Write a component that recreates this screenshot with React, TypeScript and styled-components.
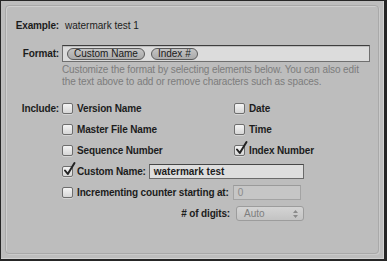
import React from 'react'
import styled, { createGlobalStyle } from 'styled-components'

const GlobalStyle = createGlobalStyle`
  html, body {
    margin: 0;
    padding: 0;
    background: #262626;
  }
  body {
    width: 387px;
    height: 261px;
    overflow: hidden;
    font-family: "Liberation Sans", Arial, sans-serif;
    font-size: 10px;
    color: #1c1c1c;
  }
`

// window chrome
const Window = styled.div`
  box-sizing: border-box;
  width: 383px;
  height: 258px;
  margin: 1px 0 0 1px;
  padding: 4px;
  background: #bdbdbd;
  border-right: 1px solid #d2d2d2;
  border-bottom: 1px solid #d2d2d2;
`

const GroupBox = styled.div`
  box-sizing: border-box;
  height: 100%;
  border: 1px solid #a9a9a9;
  border-radius: 4px;
  box-shadow: inset 1px 1px 0 #cfcfcf, 1px 1px 0 #cacaca;
  padding: 13px 8px 0 0;
  display: flex;
  flex-direction: column;
`

const FieldRow = styled.div<{ $mt?: number; $top?: boolean }>`
  display: grid;
  grid-template-columns: 53px 1fr;
  column-gap: 3px;
  align-items: ${(p) => (p.$top ? 'start' : 'center')};
  margin-top: ${(p) => p.$mt ?? 0}px;
`

const RowLabel = styled.div<{ $lh?: number }>`
  text-align: right;
  font-weight: bold;
  letter-spacing: -0.15px;
  line-height: ${(p) => p.$lh ?? 14}px;
  white-space: nowrap;
`

const ExampleValue = styled.div`
  padding-left: 3px;
  line-height: 14px;
`

const TokenField = styled.div`
  box-sizing: border-box;
  height: 17px;
  background: #dcdcdc;
  border: 1px solid #6f6f6f;
  border-top-color: #3e3e3e;
  box-shadow: inset 0 1px 0 #bdbdbd;
  display: flex;
  align-items: center;
  gap: 6px;
  padding-left: 4px;
`

const Token = styled.span`
  box-sizing: border-box;
  height: 12px;
  line-height: 10px;
  padding: 0 6px;
  border: 1px solid #5a5a5a;
  border-radius: 6px;
  background: linear-gradient(#c4c4c4, #aaaaaa);
  font-size: 10px;
  color: #1a1a1a;
  white-space: nowrap;
`

const HelpText = styled.div`
  grid-column: 2;
  margin-top: 2px;
  color: #7c7c7c;
  line-height: 12px;
  letter-spacing: -0.1px;
`

const IncludeGrid = styled.div`
  display: grid;
  grid-template-columns: 172px 1fr;
  grid-auto-rows: 21px;
  align-items: center;
`

const Check = styled.label<{ $span?: boolean }>`
  display: flex;
  align-items: center;
  gap: 4px;
  font-weight: bold;
  letter-spacing: -0.15px;
  white-space: nowrap;
  grid-column: ${(p) => (p.$span ? '1 / -1' : 'auto')};
`

const Box = styled.span`
  position: relative;
  box-sizing: border-box;
  width: 11px;
  height: 11px;
  flex: none;
  border: 1px solid #6e6e6e;
  border-radius: 2px;
  background: linear-gradient(#f4f4f4, #d6d6d6);
  box-shadow: 0 1px 0 rgba(255, 255, 255, 0.35);
`

const Tick = styled.svg`
  position: absolute;
  left: 0px;
  top: -4px;
  width: 12px;
  height: 13px;
  overflow: visible;
`

const TextInput = styled.div<{ $w: number; $disabled?: boolean }>`
  box-sizing: border-box;
  width: ${(p) => p.$w}px;
  height: 15px;
  margin-left: ${(p) => (p.$disabled ? 0 : -1)}px;
  padding-left: 4px;
  line-height: 13px;
  letter-spacing: 0;
  border: 1px solid ${(p) => (p.$disabled ? '#a3a3a3' : '#6a6a6a')};
  border-top-color: ${(p) => (p.$disabled ? '#9a9a9a' : '#474747')};
  background: ${(p) => (p.$disabled ? '#c6c6c6' : '#dedede')};
  color: ${(p) => (p.$disabled ? '#8a8a8a' : '#1c1c1c')};
  font-weight: ${(p) => (p.$disabled ? 'normal' : 'bold')};
`

const DigitsRow = styled.div`
  grid-column: 1 / -1;
  display: flex;
  align-items: center;
`

const DigitsLabel = styled.span`
  width: 168px;
  text-align: right;
  font-weight: bold;
  letter-spacing: -0.15px;
  white-space: nowrap;
`

const Popup = styled.div`
  position: relative;
  box-sizing: border-box;
  width: 68px;
  height: 15px;
  margin-left: 6px;
  padding-left: 7px;
  line-height: 13px;
  border: 1px solid #9c9c9c;
  border-radius: 3px;
  background: linear-gradient(#d4d4d4, #c3c3c3);
  color: #7e7e7e;
`

const Arrows = styled.svg`
  position: absolute;
  right: 5px;
  top: 3px;
  width: 5px;
  height: 8px;
`

const CheckBox = ({ checked }: { checked?: boolean }) => (
  <Box>
    {checked && (
      <Tick viewBox="0 0 12 13">
        <path d="M2 7.5 L4.8 11 L11.5 0" fill="none" stroke="#222" strokeWidth="2" strokeLinecap="round" strokeLinejoin="round" />
      </Tick>
    )}
  </Box>
)

const App = () => {
  return (
    <>
      <GlobalStyle />
      <Window>
        <GroupBox>
          <FieldRow>
            <RowLabel>Example:</RowLabel>
            <ExampleValue>watermark test 1</ExampleValue>
          </FieldRow>
          <FieldRow $mt={12}>
            <RowLabel>Format:</RowLabel>
            <TokenField>
              <Token>Custom Name</Token>
              <Token>Index #</Token>
            </TokenField>
            <HelpText>
              Customize the format by selecting elements below. You can also edit the text above to add or remove characters such as spaces.
            </HelpText>
          </FieldRow>
          <FieldRow $mt={10} $top>
            <RowLabel $lh={21}>Include:</RowLabel>
            <IncludeGrid>
              <Check><CheckBox />Version Name</Check>
              <Check><CheckBox />Date</Check>
              <Check><CheckBox />Master File Name</Check>
              <Check><CheckBox />Time</Check>
              <Check><CheckBox />Sequence Number</Check>
              <Check><CheckBox checked />Index Number</Check>
              <Check $span>
                <CheckBox checked />Custom Name:
                <TextInput $w={155}>watermark test</TextInput>
              </Check>
              <Check $span>
                <CheckBox />Incrementing counter starting at:
                <TextInput $w={68} $disabled>0</TextInput>
              </Check>
              <DigitsRow>
                <DigitsLabel># of digits:</DigitsLabel>
                <Popup>
                  Auto
                  <Arrows viewBox="0 0 5 8">
                    <path d="M2.5 0 L5 3 L0 3 Z M2.5 8 L5 5 L0 5 Z" fill="#8a8a8a" />
                  </Arrows>
                </Popup>
              </DigitsRow>
            </IncludeGrid>
          </FieldRow>
        </GroupBox>
      </Window>
    </>
  )
}

export default App
